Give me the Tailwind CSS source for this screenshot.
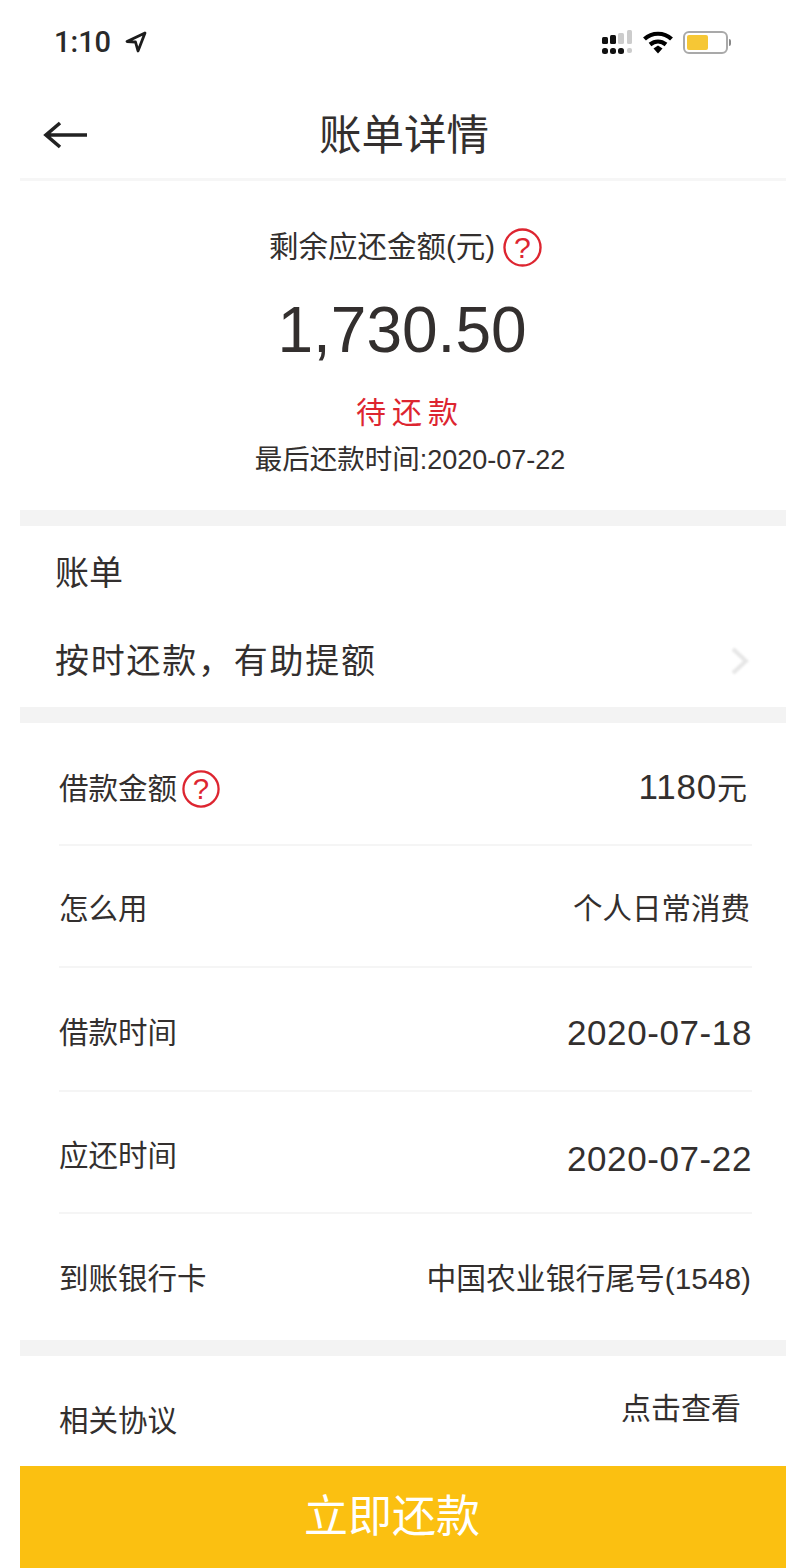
<!DOCTYPE html>
<html lang="zh-CN">
<head>
    <meta charset="UTF-8">
    <meta name="viewport" content="width=device-width, initial-scale=1.0">
    <title>账单详情</title>
    <script src="https://cdn.jsdelivr.net/npm/@tailwindcss/browser@4"></script>
</head>
<body class="bg-white">
    <div class="w-[786px] h-[1568px] overflow-hidden flex flex-col bg-white text-[#332f2e] font-['Liberation_Sans','Noto_Sans_CJK_SC',sans-serif]">
        <!-- Status bar -->
        <div class="h-[84px] shrink-0 pl-[54px] pr-[55px] flex items-center justify-between">
            <div class="flex items-center gap-[14px]">
                <span class="text-[29px] leading-none text-[#2a2a2a] font-medium font-['Roboto',sans-serif]">1:10</span>
                <svg width="22" height="22" viewBox="0 0 22 22" fill="none"><path d="M20 2 2 10.500l8.500.5 2.500 9z" stroke="#1c1c1c" stroke-width="2.800" stroke-linejoin="round"/></svg>
            </div>
            <div class="flex items-center gap-[10px]">
                <svg width="32" height="24" viewBox="0 0 32 24">
                    <rect x="1" y="7" width="6" height="7" rx="1.500" fill="#111"/><rect x="9" y="5" width="6" height="9" rx="1.500" fill="#111"/>
                    <rect x="17" y="3" width="6" height="11" rx="1.500" fill="#ccc"/><rect x="26" y="0" width="5" height="14" rx="1.500" fill="#ccc"/>
                    <rect x="1" y="18" width="6" height="6" rx="2.500" fill="#111"/><rect x="9" y="18" width="6" height="6" rx="2.500" fill="#111"/><rect x="17" y="18" width="6" height="6" rx="2.500" fill="#111"/><rect x="26" y="18" width="5" height="5" rx="2" fill="#ccc"/>
                </svg>
                <svg width="30" height="24" viewBox="0 0 30 24" fill="none">
                    <path d="M1.500 9C9 2 21 2 28.500 9" stroke="#000" stroke-width="4.200"/>
                    <path d="M7 14.500C12 10.500 18 10.500 23 14.500" stroke="#000" stroke-width="4.200"/>
                    <path d="M10.500 18.500 15 15.500l4.500 3-4.500 5z" fill="#000"/>
                </svg>
                <div class="flex items-center">
                    <div class="w-[45px] h-[23px] rounded-[6px] border-2 border-[#a9a9a9] py-[2px] pl-[2px]">
                        <div class="w-[21px] h-full rounded-[2px] bg-[#f6c735]"></div>
                    </div>
                    <div class="w-[2px] h-[7px] bg-[#888] ml-[1px] rounded-r"></div>
                </div>
            </div>
        </div>

        <!-- Nav -->
        <div class="h-[94px] shrink-0 relative flex items-center justify-center pt-[10px]">
            <svg class="absolute left-[42px] top-[36px]" width="46" height="30" viewBox="0 0 46 30" fill="none">
                <path d="M18 3 4 15l14 12M4 15h41" stroke="#222" stroke-width="3.600"/>
            </svg>
            <h1 class="text-[42.500px] leading-none font-normal ml-[22px]">账单详情</h1>
        </div>

        <div class="ml-[20px] flex-1 flex flex-col">
            <div class="h-[3px] bg-[#f6f6f6] shrink-0"></div>

            <!-- Summary -->
            <div class="h-[329px] shrink-0 flex flex-col items-center">
                <div class="mt-[46px] flex items-center h-[40px] ml-[5px]">
                    <span class="text-[29.500px] leading-none">剩余应还金额(元)</span>
                    <svg class="ml-[8px]" width="39" height="39" viewBox="0 0 40 40" fill="none"><circle cx="20" cy="20" r="18.500" stroke="#dd2530" stroke-width="2.400"/><text x="20" y="31" text-anchor="middle" font-size="31" fill="#dd2530" font-family="Liberation Sans">?</text></svg>
                </div>
                <div class="mt-[31px] text-[64px] leading-none mr-[2px]">1,730.50</div>
                <div class="mt-[36px] text-[30px] leading-none text-[#dd2530] tracking-[6px] ml-[14px]">待还款</div>
                <div class="mt-[18px] text-[27.500px] leading-none ml-[14px]">最后还款时间<span class="text-[27px]">:2020-07-22</span></div>
            </div>

            <div class="h-[16px] bg-[#f3f3f3] shrink-0"></div>

            <!-- Bill -->
            <div class="h-[181px] shrink-0 pl-[35px] pr-[36px] flex flex-col">
                <div class="mt-[30px] text-[34px] leading-none">账单</div>
                <div class="mt-[54px] flex items-center justify-between">
                    <span class="text-[34px] leading-none tracking-[1.750px]">按时还款，有助提额</span>
                    <svg class="blur-[1px]" width="20" height="30" viewBox="0 0 20 30" fill="none"><path d="M3 3l13 12L3 27" stroke="#e6e6e6" stroke-width="4"/></svg>
                </div>
            </div>

            <div class="h-[16px] bg-[#f3f3f3] shrink-0"></div>

            <!-- Detail rows -->
            <div class="h-[617px] shrink-0 pl-[39px] pr-[34px] flex flex-col">
                <div class="h-[123px] shrink-0 pt-[10px] border-b-2 border-[#f5f5f5] flex items-center justify-between">
                    <div class="flex items-center gap-[5px]">
                        <span class="text-[29.500px] leading-none">借款金额</span>
                        <svg width="38" height="38" viewBox="0 0 40 40" fill="none"><circle cx="20" cy="20" r="18.500" stroke="#dd2530" stroke-width="2.400"/><text x="20" y="31" text-anchor="middle" font-size="31" fill="#dd2530" font-family="Liberation Sans">?</text></svg>
                    </div>
                    <span class="text-[35px] leading-none tracking-[0.800px] mr-[5px] mb-[4px]">1180<span class="text-[30px] tracking-normal">元</span></span>
                </div>
                <div class="h-[122px] shrink-0 pt-[6px] border-b-2 border-[#f5f5f5] flex items-center justify-between">
                    <span class="text-[29.500px] leading-none">怎么用</span>
                    <span class="text-[29.500px] leading-none mr-[2px]">个人日常消费</span>
                </div>
                <div class="h-[124px] shrink-0 pt-[8px] border-b-2 border-[#f5f5f5] flex items-center justify-between">
                    <span class="text-[29.500px] leading-none">借款时间</span>
                    <span class="text-[35px] leading-none tracking-[0.600px] mb-[2px]">2020-07-18</span>
                </div>
                <div class="h-[122px] shrink-0 pt-[8px] border-b-2 border-[#f5f5f5] flex items-center justify-between">
                    <span class="text-[29.500px] leading-none">应还时间</span>
                    <span class="text-[35px] leading-none tracking-[0.600px] mt-[4px]">2020-07-22</span>
                </div>
                <div class="h-[126px] shrink-0 pt-[4px] flex items-center justify-between">
                    <span class="text-[29.500px] leading-none">到账银行卡</span>
                    <span class="text-[29.800px] leading-none mr-[1px]">中国农业银行尾号(1548)</span>
                </div>
            </div>

            <div class="h-[16px] bg-[#f3f3f3] shrink-0"></div>

            <!-- Agreement -->
            <div class="flex-1 pl-[39px] pr-[45px] flex justify-between">
                <span class="mt-[50px] text-[29.500px] leading-none">相关协议</span>
                <span class="mt-[38px] text-[30px] leading-none">点击查看</span>
            </div>

            <!-- Bottom button -->
            <button class="h-[102px] shrink-0 pr-[22px] bg-[#fbc011] text-white text-[44px] leading-none">立即还款</button>
        </div>
    </div>
</body>
</html>
